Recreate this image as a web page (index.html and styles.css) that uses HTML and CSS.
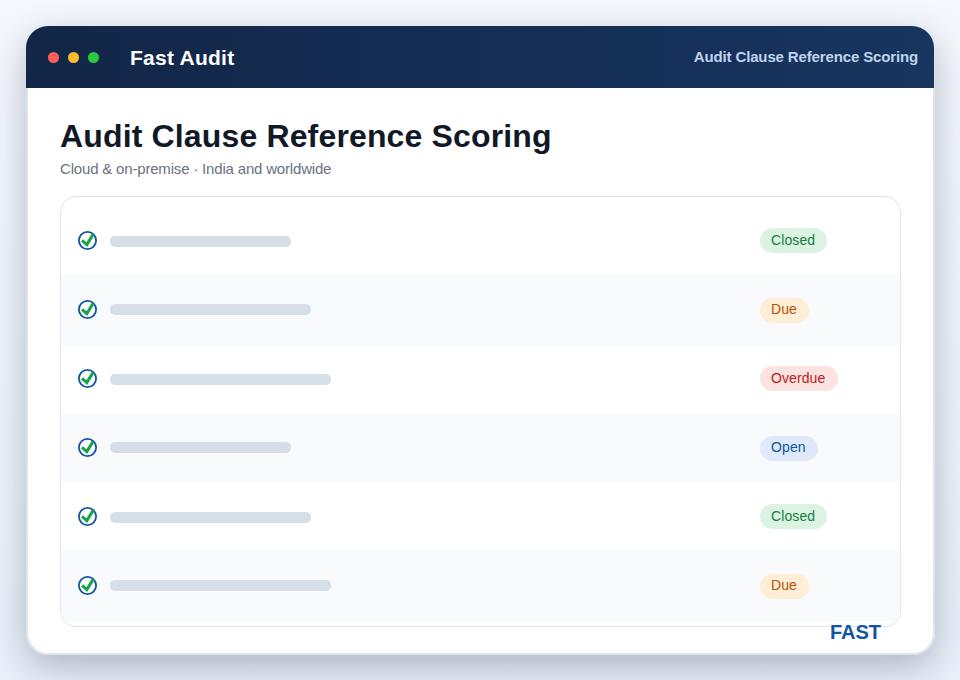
FILE: index.html
```html
<!DOCTYPE html>
<html lang="en">
<head>
  <meta charset="UTF-8">
  <meta name="viewport" content="width=device-width, initial-scale=1.0">
  <title>Fast Audit</title>
  <link rel="stylesheet" href="styles.css">
</head>
<body>
  <svg class="sprite" width="0" height="0">
    <symbol id="check" viewBox="0 0 19 19">
      <circle cx="9.5" cy="9.5" r="8.6" fill="#fff" stroke="#1254a1" stroke-width="1.8"/>
      <path d="M4 9.4 L8.8 13.6 L15.2 3.2" fill="none" stroke="#16a34a" stroke-width="3.1"/>
    </symbol>
  </svg>
  <div class="window">
    <div class="navbar">
      <div class="dots">
        <span class="dot red"></span>
        <span class="dot yellow"></span>
        <span class="dot green"></span>
      </div>
      <div class="brand">Fast Audit</div>
      <div class="section">Audit Clause Reference Scoring</div>
    </div>
    <div class="content">
      <h1>Audit Clause Reference Scoring</h1>
      <p class="subtitle">Cloud &amp; on-premise · India and worldwide</p>
      <div class="list">
        <div class="row">
          <svg class="icon"><use href="#check"/></svg>
          <div class="line"><span class="bar short"></span></div>
          <span class="badge closed">Closed</span>
        </div>
        <div class="row">
          <svg class="icon"><use href="#check"/></svg>
          <div class="line"><span class="bar medium"></span></div>
          <span class="badge due">Due</span>
        </div>
        <div class="row">
          <svg class="icon"><use href="#check"/></svg>
          <div class="line"><span class="bar long"></span></div>
          <span class="badge overdue">Overdue</span>
        </div>
        <div class="row">
          <svg class="icon"><use href="#check"/></svg>
          <div class="line"><span class="bar short"></span></div>
          <span class="badge open">Open</span>
        </div>
        <div class="row">
          <svg class="icon"><use href="#check"/></svg>
          <div class="line"><span class="bar medium"></span></div>
          <span class="badge closed">Closed</span>
        </div>
        <div class="row">
          <svg class="icon"><use href="#check"/></svg>
          <div class="line"><span class="bar long"></span></div>
          <span class="badge due">Due</span>
        </div>
      </div>
    </div>
    <div class="watermark">FAST</div>
  </div>
</body>
</html>
```
FILE: styles.css
```css
* {
  box-sizing: border-box;
}

body {
  margin: 0;
  padding: 26px 25px 25px 26px;
  height: 680px;
  overflow: hidden;
  font-family: "Liberation Sans", Arial, sans-serif;
  background: linear-gradient(#f5f8fd, #e8f0fa);
}

.sprite {
  position: absolute;
}

.window {
  position: relative;
  width: 909px;
  height: 629px;
  background-color: #fff;
  border-radius: 22px;
  box-shadow: inset 0 0 0 2px #dde4ec, 0 12px 36px rgba(15, 23, 42, 0.27);
}

/* Title bar */
.navbar {
  display: flex;
  align-items: center;
  width: 908px;
  height: 62px;
  padding: 0 16px 0 22px;
  border-radius: 22px 22px 0 0;
  background: linear-gradient(90deg, #122647, #17355f);
}

.dots {
  display: flex;
  gap: 9px;
  width: 82px;
}

.dot {
  width: 11px;
  height: 11px;
  border-radius: 50%;
}

.red {
  background-color: #ff5f57;
}

.yellow {
  background-color: #febc2e;
}

.green {
  background-color: #28c840;
}

.brand {
  padding-top: 2px;
  color: #fff;
  font-size: 21px;
  font-weight: bold;
  letter-spacing: 0.25px;
}

.section {
  margin-left: auto;
  padding-bottom: 2px;
  color: #bfd3ef;
  font-size: 15px;
  font-weight: bold;
  letter-spacing: -0.14px;
}

/* Page content */
.content {
  padding: 29px 34px 0;
}

h1 {
  margin: 0;
  color: #111827;
  font-size: 32px;
  line-height: 38px;
  letter-spacing: 0.15px;
}

.subtitle {
  margin: 5px 0 0;
  color: #6b7280;
  font-size: 15px;
  line-height: 18px;
  letter-spacing: -0.18px;
}

.list {
  height: 431px;
  margin-top: 18px;
  padding-top: 10px;
  border: 1px solid #dde4ec;
  border-radius: 16px;
  overflow: hidden;
}

.row {
  display: flex;
  align-items: flex-start;
  height: 68px;
  padding: 0 17px;
}

.row:nth-child(even) {
  height: 70px;
  background-color: #f8fafc;
}

.icon {
  width: 19px;
  height: 19px;
  margin: 24px 13px 0 0;
}

.row:nth-child(even) .icon {
  margin-top: 25px;
}

.line {
  width: 650px;
  padding-top: 29px;
}

.bar {
  display: block;
  height: 11px;
  border-radius: 5px;
  background-color: #d6dee8;
}

.short {
  width: 181px;
}

.medium {
  width: 201px;
}

.long {
  width: 221px;
}

.badge {
  height: 25px;
  margin-top: 21px;
  padding-left: 11px;
  border-radius: 13px;
  font-size: 14px;
  line-height: 25px;
  letter-spacing: 0.1px;
}

.row:nth-child(even) .badge {
  margin-top: 23px;
  line-height: 23px;
}

.closed {
  width: 67px;
  color: #15803d;
  background-color: #dcf2e3;
}

.due {
  width: 49px;
  color: #b45309;
  background-color: #fdeed5;
}

.overdue {
  width: 78px;
  color: #b91c1c;
  background-color: #fde2e2;
}

.open {
  width: 58px;
  color: #1254a1;
  background-color: #dfe9f9;
}

/* Overlaps the bottom edge of the list */
.watermark {
  position: absolute;
  right: 54px;
  bottom: 11px;
  color: #1254a1;
  font-size: 20px;
  font-weight: bold;
  line-height: 23px;
}
```
